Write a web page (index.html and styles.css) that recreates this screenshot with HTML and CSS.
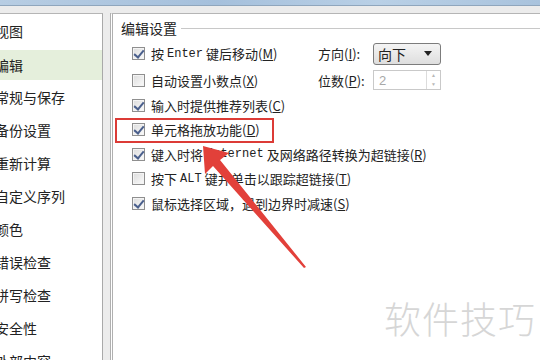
FILE: index.html
```html
<!DOCTYPE html>
<html lang="zh-CN">
<head>
    <meta charset="UTF-8">
    <title>选项 - 编辑</title>
    <link rel="stylesheet" href="styles.css">
</head>
<body>
    <div class="titlebar"></div>
    <div class="window">
        <ul class="nav">
            <li>视图</li>
            <li class="active">编辑</li>
            <li>常规与保存</li>
            <li>备份设置</li>
            <li>重新计算</li>
            <li>自定义序列</li>
            <li>颜色</li>
            <li>错误检查</li>
            <li>拼写检查</li>
            <li>安全性</li>
            <li>外部内容</li>
        </ul>
        <div class="panel">
            <div class="group-title"><span>编辑设置</span><i class="rule"></i></div>

            <div class="row row-first">
                <label class="opt"><span class="box checked"></span>按 <span class="mono">Enter</span> 键后移动(<u>M</u>)</label>
                <div class="field">
                    <span class="field-label">方向(<u>I</u>):</span>
                    <div class="select">向下<span class="caret"></span></div>
                </div>
            </div>
            <div class="row row-second">
                <label class="opt"><span class="box"></span>自动设置小数点(<u>X</u>)</label>
                <div class="field">
                    <span class="field-label">位数(<u>P</u>):</span>
                    <div class="spin">2<span class="spin-btns"><b>▲</b><b>▼</b></span></div>
                </div>
            </div>
            <div class="row">
                <label class="opt"><span class="box checked"></span>输入时提供推荐列表(<u>C</u>)</label>
            </div>
            <div class="row">
                <label class="opt"><span class="box checked"></span>单元格拖放功能(<u>D</u>)</label>
            </div>
            <div class="row">
                <label class="opt"><span class="box checked"></span>键入时将 <span class="mono">Internet</span> 及网络路径转换为超链接(<u>R</u>)</label>
            </div>
            <div class="row">
                <label class="opt"><span class="box"></span>按下 <span class="mono">ALT</span> 键并单击以跟踪超链接(<u>T</u>)</label>
            </div>
            <div class="row">
                <label class="opt"><span class="box checked"></span>鼠标选择区域，遇到边界时减速(<u>S</u>)</label>
            </div>
        </div>
    </div>

    <!-- annotation drawn over the screenshot -->
    <div class="highlight"></div>
    <svg class="arrow" width="540" height="360" viewBox="0 0 540 360">
        <polygon points="203,146 229,153 220,160 306,267 304,268 213,166 205,174" fill="#e2403a"/>
    </svg>
    <div class="watermark">软件技巧</div>
</body>
</html>
```

FILE: styles.css
```css
* {
    margin: 0;
    padding: 0;
    box-sizing: border-box;
}

body {
    width: 540px;
    height: 360px;
    overflow: hidden;
    position: relative;
    background: #ececec;
    font-family: 'Noto Sans CJK SC', 'Noto Sans', sans-serif;
    font-size: 13px;
    color: #222;
}

.titlebar {
    height: 6px;
    background: linear-gradient(90deg, #b7cde3, #a5c0dc 40%, #b9d0e6 70%, #a9c3dd);
    border-bottom: 1px solid #8fa6bd;
}

.window {
    display: flex;
    height: 354px;
    padding-top: 7px;
}

.nav {
    list-style: none;
    width: 103px;
    background: #fff;
    border-top: 1px solid #b5b5b5;
    border-right: 1px solid #a9a9a9;
    padding-top: 1px;
    overflow: hidden;
}

.nav li {
    height: 33px;
    line-height: 33px;
    margin-left: -5px;
    font-size: 14px;
    white-space: nowrap;
    color: #222;
}

.nav li.active {
    background: #e5efdc;
    background-clip: content-box;
    padding: 2px 0 1px;
    line-height: 30px;
}

.panel {
    flex: 1;
    margin-left: 7px;
    background: #fff;
    border-top: 1px solid #b5b5b5;
    border-left: 3px double #b0b0b0;
    padding: 3px 0 0 8px;
}

.group-title {
    display: flex;
    align-items: center;
    height: 22px;
    font-size: 14px;
}

.group-title .rule {
    flex: 1;
    height: 2px;
    margin-left: 4px;
    margin-top: 2px;
    border-top: 1px solid #c8c8c8;
    border-bottom: 1px solid #fff;
}

.row {
    display: flex;
    align-items: center;
    height: 24.5px;
    padding-left: 11px;
}

.row-first {
    margin-top: 1px;
    height: 27px;
}

.row-second {
    height: 26px;
}

.opt {
    display: flex;
    align-items: center;
    width: 188px;
    white-space: nowrap;
}

.mono {
    font-family: 'Liberation Mono', monospace;
    font-size: 12px;
    margin: 0 3px;
}

u {
    text-decoration: underline;
    text-underline-offset: 1px;
}

.box {
    width: 13px;
    height: 13px;
    margin-right: 6px;
    border: 1px solid #8f8f8f;
    background: linear-gradient(135deg, #dcdcdc, #fbfbfb);
    box-shadow: inset 0 0 0 1px #f4f4f4;
    position: relative;
    flex-shrink: 0;
}

.box.checked::after {
    content: '';
    position: absolute;
    left: 3px;
    top: 0;
    width: 4px;
    height: 8px;
    border-right: 2px solid #4a5f8c;
    border-bottom: 2px solid #4a5f8c;
    transform: rotate(40deg);
}

.field {
    display: flex;
    align-items: center;
}

.field-label {
    width: 55px;
    margin-left: -2px;
}

.select {
    width: 68px;
    height: 22px;
    display: flex;
    align-items: center;
    justify-content: space-between;
    padding: 0 8px 0 4px;
    border: 1px solid #7c7c7c;
    border-radius: 3px;
    background: linear-gradient(#f4f4f4, #dedede);
    font-size: 14px;
}

.caret {
    width: 0;
    height: 0;
    border-left: 4px solid transparent;
    border-right: 4px solid transparent;
    border-top: 5px solid #222;
}

.spin {
    width: 68px;
    height: 20px;
    display: flex;
    align-items: center;
    justify-content: space-between;
    padding-left: 5px;
    border: 1px solid #c9c9c9;
    color: #a8a8a8;
    font-family: 'Liberation Sans', sans-serif;
    font-size: 13px;
}

.spin-btns {
    display: flex;
    flex-direction: column;
    width: 14px;
    height: 18px;
    border-left: 1px solid #dcdcdc;
}

.spin-btns b {
    flex: 1;
    font-size: 5px;
    line-height: 9px;
    text-align: center;
    color: #b8b8b8;
    font-weight: normal;
}

.highlight {
    position: absolute;
    left: 115px;
    top: 118px;
    width: 159px;
    height: 25px;
    border: 2px solid #dc3b36;
}

.arrow {
    position: absolute;
    left: 0;
    top: 0;
}

.watermark {
    position: absolute;
    left: 384px;
    top: 291px;
    font-size: 37px;
    letter-spacing: 1px;
    color: #d6d6d6;
    font-family: 'Noto Sans CJK SC', sans-serif;
    font-weight: 300;
}
```
